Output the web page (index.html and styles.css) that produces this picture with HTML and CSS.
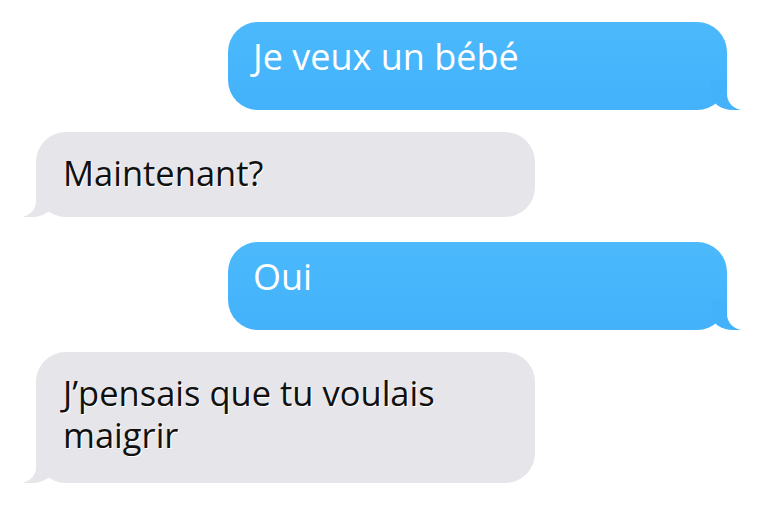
FILE: index.html
```html
<!DOCTYPE html>
<html lang="fr">
<head>
    <meta charset="UTF-8">
    <meta name="viewport" content="width=device-width, initial-scale=1.0">
    <title>Messages</title>
    <link rel="stylesheet" href="styles.css">
</head>
<body>

    <div class="thread">
        <div class="bubble sent">Je veux un bébé</div>
        <div class="bubble received">Maintenant?</div>
        <div class="bubble sent">Oui</div>
        <div class="bubble received tall">J’pensais que tu voulais<br>maigrir</div>
    </div>

</body>
</html>
```

FILE: styles.css
```css
body { margin: 0; background: #fff; font-family: "Open Sans", "DejaVu Sans", sans-serif; }
.thread { display: flex; flex-direction: column; gap: 22px; padding-top: 22px; }
.bubble { position: relative; box-sizing: border-box; width: 499px; line-height: 42px; border-radius: 30px; }
.sent { margin-left: 228px; padding: 14px 25px 32px; font-size: 36px; color: #fff; background: linear-gradient(#4bb9fb, #43b2fb); }
.received { margin-left: 36px; padding: 20px 27px 23px; font-size: 34.5px; color: #111; background: #e5e5ea; text-shadow: 1px 1px 0 #fff; }
.received + .sent { margin-top: 3px; }
.tall { padding-bottom: 27px; }

/* tails */
.bubble::before, .bubble::after { content: ""; position: absolute; bottom: 0; height: 30px; }
.sent::before { right: -14px; width: 30px; background: #43b2fb; border-bottom-left-radius: 22px 16px; }
.sent::after { right: -40px; width: 40px; background: #fff; border-bottom-left-radius: 16px; }
.received::before { left: -12px; width: 30px; background: #e5e5ea; border-bottom-right-radius: 22px 16px; }
.received::after { left: -40px; width: 40px; background: #fff; border-bottom-right-radius: 16px; }
```
